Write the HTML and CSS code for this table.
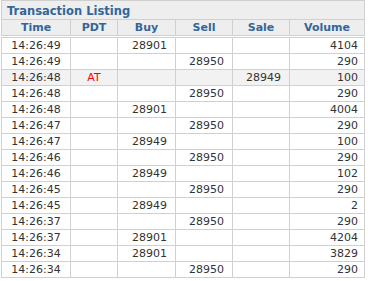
FILE: index.html
```html
<!DOCTYPE html>
<html>
<head>
<meta charset="utf-8">
<link rel="stylesheet" href="styles.css">
</head>
<body>
<div class="listing">
  <div class="head grid">
    <div class="title">Transaction Listing</div>
    <div class="th">Time</div>
    <div class="th">PDT</div>
    <div class="th">Buy</div>
    <div class="th">Sell</div>
    <div class="th">Sale</div>
    <div class="th">Volume</div>
  </div>
  <div class="body grid">
    <div class="row"><div class="c t">14:26:49</div><div class="c p"></div><div class="c n">28901</div><div class="c n"></div><div class="c n"></div><div class="c v">4104</div></div>
    <div class="row"><div class="c t">14:26:49</div><div class="c p"></div><div class="c n"></div><div class="c n">28950</div><div class="c n"></div><div class="c v">290</div></div>
    <div class="row hl"><div class="c t">14:26:48</div><div class="c p">AT</div><div class="c n"></div><div class="c n"></div><div class="c n">28949</div><div class="c v">100</div></div>
    <div class="row"><div class="c t">14:26:48</div><div class="c p"></div><div class="c n"></div><div class="c n">28950</div><div class="c n"></div><div class="c v">290</div></div>
    <div class="row"><div class="c t">14:26:48</div><div class="c p"></div><div class="c n">28901</div><div class="c n"></div><div class="c n"></div><div class="c v">4004</div></div>
    <div class="row"><div class="c t">14:26:47</div><div class="c p"></div><div class="c n"></div><div class="c n">28950</div><div class="c n"></div><div class="c v">290</div></div>
    <div class="row"><div class="c t">14:26:47</div><div class="c p"></div><div class="c n">28949</div><div class="c n"></div><div class="c n"></div><div class="c v">100</div></div>
    <div class="row"><div class="c t">14:26:46</div><div class="c p"></div><div class="c n"></div><div class="c n">28950</div><div class="c n"></div><div class="c v">290</div></div>
    <div class="row"><div class="c t">14:26:46</div><div class="c p"></div><div class="c n">28949</div><div class="c n"></div><div class="c n"></div><div class="c v">102</div></div>
    <div class="row"><div class="c t">14:26:45</div><div class="c p"></div><div class="c n"></div><div class="c n">28950</div><div class="c n"></div><div class="c v">290</div></div>
    <div class="row"><div class="c t">14:26:45</div><div class="c p"></div><div class="c n">28949</div><div class="c n"></div><div class="c n"></div><div class="c v">2</div></div>
    <div class="row"><div class="c t">14:26:37</div><div class="c p"></div><div class="c n"></div><div class="c n">28950</div><div class="c n"></div><div class="c v">290</div></div>
    <div class="row"><div class="c t">14:26:37</div><div class="c p"></div><div class="c n">28901</div><div class="c n"></div><div class="c n"></div><div class="c v">4204</div></div>
    <div class="row"><div class="c t">14:26:34</div><div class="c p"></div><div class="c n">28901</div><div class="c n"></div><div class="c n"></div><div class="c v">3829</div></div>
    <div class="row"><div class="c t">14:26:34</div><div class="c p"></div><div class="c n"></div><div class="c n">28950</div><div class="c n"></div><div class="c v">290</div></div>
  </div>
</div>
</body>
</html>
```
FILE: styles.css
```css
html, body {
  margin: 0;
  padding: 0;
  background: #fff;
}
body {
  font-family: "DejaVu Sans", Verdana, sans-serif;
}
.listing {
  margin-left: 1px;
  width: 364px;
}
.grid {
  display: grid;
  grid-template-columns: 68px 46px 57px 56px 56px 74px;
  gap: 1px;
  padding: 1px;
  background: #d0d0d0;
}
.title {
  grid-column: 1 / -1;
  background: #eeeeee;
  height: 18px;
  box-sizing: border-box;
  padding: 3px 0 0 5px;
  font-size: 11.5px;
  line-height: 15px;
  font-weight: bold;
  color: #336699;
}
.th {
  background: #eeeeee;
  height: 15px;
  font-size: 11px;
  line-height: 15px;
  font-weight: bold;
  color: #336699;
  text-align: center;
}
.body {
  margin-top: 1px;
}
.row {
  display: contents;
}
.c {
  background: #fff;
  height: 15px;
  box-sizing: border-box;
  padding-top: 1px;
  font-size: 11px;
  line-height: 14px;
  color: #333333;
  white-space: nowrap;
}
.hl .c {
  background: #f2f2f2;
}
.t {
  text-align: center;
}
.p {
  text-align: center;
  color: #ff0000;
}
.n {
  text-align: right;
  padding-right: 8px;
}
.v {
  text-align: right;
  padding-right: 6px;
}
```
